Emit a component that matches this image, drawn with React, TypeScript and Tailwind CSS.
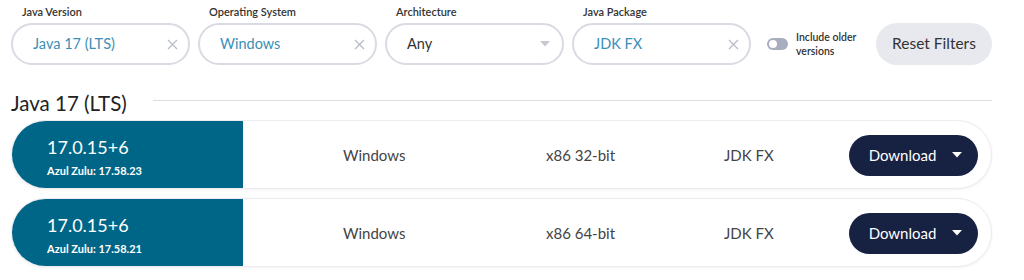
import React from "react";

const font = { fontFamily: "Lato, 'Open Sans', sans-serif" };

function XIcon() {
  return (
    <svg width="11" height="11" viewBox="0 0 11 11" className="shrink-0">
      <path d="M1 1 L10 10 M10 1 L1 10" stroke="#b8bcc6" strokeWidth="1.3" />
    </svg>
  );
}

function Caret({ color }: { color: string }) {
  return (
    <svg width="10" height="6" viewBox="0 0 10 6" className="shrink-0">
      <path d="M0 0 L10 0 L5 5.5 Z" fill={color} />
    </svg>
  );
}

function Filter({ label, value, teal, select }: { label: string; value: string; teal?: boolean; select?: boolean }) {
  return (
    <div className="flex flex-col w-[179px]">
      <div className="text-[11px] font-semibold text-[#333] h-[14px] leading-[14px] pl-[11px] mb-[4px]">{label}</div>
      <div className="h-[42px] rounded-full border-2 border-[#d9dbe3] flex items-center justify-between pl-[20px] pr-[10px] bg-white">
        <span className={"text-[14.5px] " + (teal ? "text-[#3a8fb7]" : "text-[#333]")}>{value}</span>
        {select ? <span className="mr-[2px]"><Caret color="#c7c9d0" /></span> : <XIcon />}
      </div>
    </div>
  );
}

function ResultRow({ zulu, arch }: { zulu: string; arch: string }) {
  return (
    <div className="flex h-[69px] rounded-full border border-[#ececf0] shadow-[0_1px_3px_rgba(0,0,0,0.06)] bg-white items-center">
      <div className="w-[231px] h-full bg-[#006687] rounded-l-full flex flex-col justify-center pl-[35px] text-white pt-[3px]">
        <div className="text-[18px] leading-[24px]">17.0.15+6</div>
        <div className="text-[11px] font-bold leading-[14px] mt-[5px]">Azul Zulu: {zulu}</div>
      </div>
      <div className="text-[15px] text-[#444] w-[204px] pl-[100px] pt-[2px]">Windows</div>
      <div className="text-[15px] text-[#444] w-[177px] pl-[99px] pt-[2px]">{arch}</div>
      <div className="text-[15px] text-[#444] w-[225px] pl-[100px] pt-[2px]">JDK FX</div>
      <button className="w-[129px] h-[41px] rounded-full bg-[#172142] text-white text-[15px] flex items-center justify-center gap-[16px] pl-[4px] mt-[1px]">
        <span>Download</span>
        <Caret color="#ffffff" />
      </button>
    </div>
  );
}

export default function App() {
  return (
    <div className="w-[1024px] h-[280px] bg-white overflow-hidden" style={font}>
      <div className="pl-[11px] pr-[32px] pt-[5px] flex items-end">
        <div className="flex gap-2">
          <Filter label="Java Version" value="Java 17 (LTS)" teal />
          <Filter label="Operating System" value="Windows" teal />
          <Filter label="Architecture" value="Any" select />
          <Filter label="Java Package" value="JDK FX" teal />
        </div>
        <div className="flex items-center ml-[16px] h-[42px]">
          <div className="w-[21px] h-[12px] rounded-full bg-[#a8adc0] flex items-center pl-[2px]">
            <div className="w-[8px] h-[8px] rounded-full bg-white" />
          </div>
          <div className="ml-[8px] text-[10.5px] leading-[14px] text-[#333] font-semibold w-[80px]">
            Include older<br />versions
          </div>
        </div>
        <button className="ml-auto w-[116px] h-[42px] rounded-full bg-[#e8e9ef] text-[15.5px] text-[#333]">
          Reset Filters
        </button>
      </div>
      <div className="pl-[11px] pr-[32px] mt-[25px] flex items-center">
        <div className="text-[20.5px] text-[#222] leading-[26px] w-[142px]">Java 17 (LTS)</div>
        <div className="flex-1 h-px bg-[#dcdde2] mt-[-5px]" />
      </div>
      <div className="pl-[11px] pr-[32px] mt-[4px] flex flex-col gap-[9px]">
        <ResultRow zulu="17.58.23" arch="x86 32-bit" />
        <ResultRow zulu="17.58.21" arch="x86 64-bit" />
      </div>
    </div>
  );
}
